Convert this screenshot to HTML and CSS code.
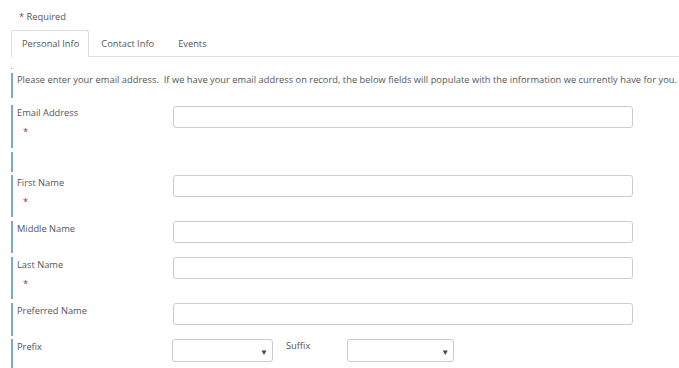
FILE: index.html
```html
<!DOCTYPE html>
<html lang="en">
    <head>
        <meta charset="utf-8">
        <title>Registration</title>
        <link rel="stylesheet" href="styles.css">
    </head>
    <body>
        <div class="form-wrap">
            <p class="required-note"><span class="star">*</span> Required</p>

            <ul class="tabs">
                <li class="tab active">Personal Info</li>
                <li class="tab">Contact Info</li>
                <li class="tab">Events</li>
            </ul>

            <div class="tick"></div>

            <div class="row intro">
                Please enter your email address.&nbsp; If we have your email address on record, the below fields will populate with the information we currently have for you.
            </div>

            <div class="row row-email">
                <div class="label">Email Address<span class="star req">*</span></div>
                <input class="field field-email" type="text">
            </div>

            <div class="row row-empty"></div>

            <div class="row row-tall">
                <div class="label">First Name<span class="star req">*</span></div>
                <input class="field" type="text">
            </div>

            <div class="row row-short">
                <div class="label">Middle Name</div>
                <input class="field" type="text">
            </div>

            <div class="row row-tall">
                <div class="label">Last Name<span class="star req">*</span></div>
                <input class="field" type="text">
            </div>

            <div class="row row-short row-pref">
                <div class="label">Preferred Name</div>
                <input class="field" type="text">
            </div>

            <div class="row row-short">
                <div class="label label-narrow">Prefix</div>
                <div class="select prefix"><span class="arrow">&#9660;</span></div>
                <div class="label suffix-label">Suffix</div>
                <div class="select suffix"><span class="arrow">&#9660;</span></div>
            </div>
        </div>
    </body>
</html>
```

FILE: styles.css
```css
body {
    margin: 0;
    font-family: "Open Sans", Arial, sans-serif;
    font-size: 9.3px;
    color: #555555;
    background-color: #ffffff;
}

.form-wrap {
    padding: 10px 0 0 11px;
}

.required-note {
    margin: 0 0 6px 8px;
    line-height: 14px;
}

.star {
    color: #a0303c;
}

.tabs {
    list-style: none;
    margin: 0;
    padding: 0;
    display: flex;
    border-bottom: 1px solid #dddddd;
    height: 26px;
}

.tab {
    padding: 0 11px;
    line-height: 26px;
    border: 1px solid transparent;
    border-bottom: none;
    color: #555555;
}

.tab.active {
    border-color: #dddddd;
    border-radius: 3px 3px 0 0;
    background-color: #ffffff;
    height: 26px;
    padding: 0 9px 0 10px;
}

.tick {
    width: 1px;
    height: 1px;
    margin: 11px 0 4px 0;
    background-color: #7fa7c9;
}

.row {
    display: flex;
    align-items: flex-start;
    border-left: 2px solid #7fa7c9;
    margin-bottom: 4px;
    padding-left: 4px;
}

.intro {
    display: block;
    height: 25px;
    line-height: 14px;
    margin-bottom: 7px;
    white-space: nowrap;
    letter-spacing: 0.02px;
}

.row-email {
    height: 43px;
}

.row-tall {
    height: 42px;
}

.row-short {
    height: 32px;
}

.row-pref {
    height: 33px;
    margin-bottom: 3px;
}

.row-empty {
    height: 20px;
    margin-bottom: 3px;
}

.label {
    width: 156px;
    flex-shrink: 0;
    line-height: 14px;
    padding-top: 1px;
}

.req {
    display: block;
    margin: 5px 0 0 6px;
    line-height: 13px;
}

.field {
    width: 460px;
    height: 22px;
    margin: 0;
    padding: 0 4px;
    box-sizing: border-box;
    border: 1px solid #cccccc;
    border-radius: 3px;
    font-family: inherit;
    font-size: 10px;
}

.field-email {
    margin-top: 1px;
}

.label-narrow {
    width: 155px;
}

.select {
    height: 23px;
    box-sizing: border-box;
    border: 1px solid #cccccc;
    border-radius: 3px;
    display: flex;
    align-items: center;
    justify-content: flex-end;
    padding-right: 4px;
}

.arrow {
    font-size: 8px;
    color: #444444;
    line-height: 8px;
    padding-top: 2px;
}

.prefix {
    width: 101px;
}

.suffix-label {
    width: auto;
    margin: 0 37px 0 13px;
    padding-top: 0;
}

.suffix {
    width: 107px;
}
```
